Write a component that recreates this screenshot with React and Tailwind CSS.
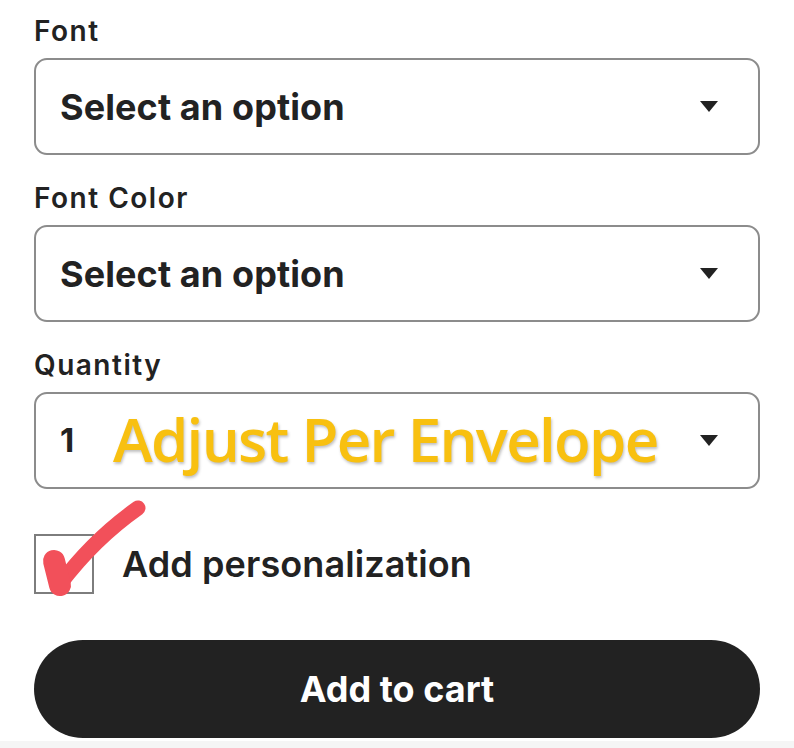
import React from 'react';

const Caret = () => (
  <svg width="20" height="13" viewBox="0 0 20 13" className="shrink-0">
    <path d="M1 1 L19 1 L10 12 Z" fill="#222222" />
  </svg>
);

const SelectBox = ({ label, children }) => (
  <div className="flex flex-col">
    <label className="h-[30px] text-[28px] leading-[30px] font-semibold tracking-[1.5px] text-[#222222]">
      {label}
    </label>
    <div className="mt-[12px] h-[97px] rounded-[13px] border-2 border-[#8c8c8c] bg-white flex items-center justify-between pl-[24px] pr-[39px]">
      <div className="flex items-center min-w-0">{children}</div>
      <Caret />
    </div>
  </div>
);

const App = () => {
  return (
    <div className="w-[794px] h-[748px] bg-white overflow-hidden flex flex-col font-['Inter','Liberation_Sans',sans-serif] text-[#222222]">
      <div className="px-[34px] pt-[16px] flex flex-col gap-[28px]">
        <SelectBox label="Font">
          <span className="text-[36px] font-bold tracking-[0.1px]">Select an option</span>
        </SelectBox>
        <SelectBox label="Font Color">
          <span className="text-[36px] font-bold tracking-[0.1px]">Select an option</span>
        </SelectBox>
        <SelectBox label="Quantity">
          <span className="text-[33px] font-bold w-[53px]">1</span>
          <span className="font-['Open_Sans','Noto_Sans',sans-serif] text-[60px] font-semibold leading-none tracking-[-1.7px] text-[#f8c010] [text-shadow:1px_2px_3px_rgba(0,0,0,0.25)] whitespace-nowrap -mt-[4px]">
            Adjust Per Envelope
          </span>
        </SelectBox>
      </div>

      <div className="px-[34px] mt-[45px] relative flex items-center gap-[28px]">
        <div className="w-[60px] h-[60px] border-2 border-[#7d7d7d] bg-white shrink-0" />
        <span className="text-[36px] font-semibold tracking-[0.1px]">Add personalization</span>
        <svg
          className="absolute left-[34px] top-[-40px] pointer-events-none"
          width="130"
          height="110"
          viewBox="0 -40 130 110"
        >
          <path
            d="M21 28 L26 50 Q60 5 104 -26"
            fill="none"
            stroke="#f2505a"
            strokeWidth="15"
            strokeLinecap="round"
            strokeLinejoin="round"
          />
          <path
            d="M20 27 L26 51"
            fill="none"
            stroke="#f2505a"
            strokeWidth="22"
            strokeLinecap="round"
          />
        </svg>
      </div>

      <div className="px-[34px] mt-[46px]">
        <button className="w-full h-[98px] rounded-full bg-[#222222] text-white text-[36px] font-bold flex items-center justify-center">
          Add to cart
        </button>
      </div>
      <div className="mt-[3px] h-[8px] bg-[#f5f5f5]" />
    </div>
  );
};

export default App;
